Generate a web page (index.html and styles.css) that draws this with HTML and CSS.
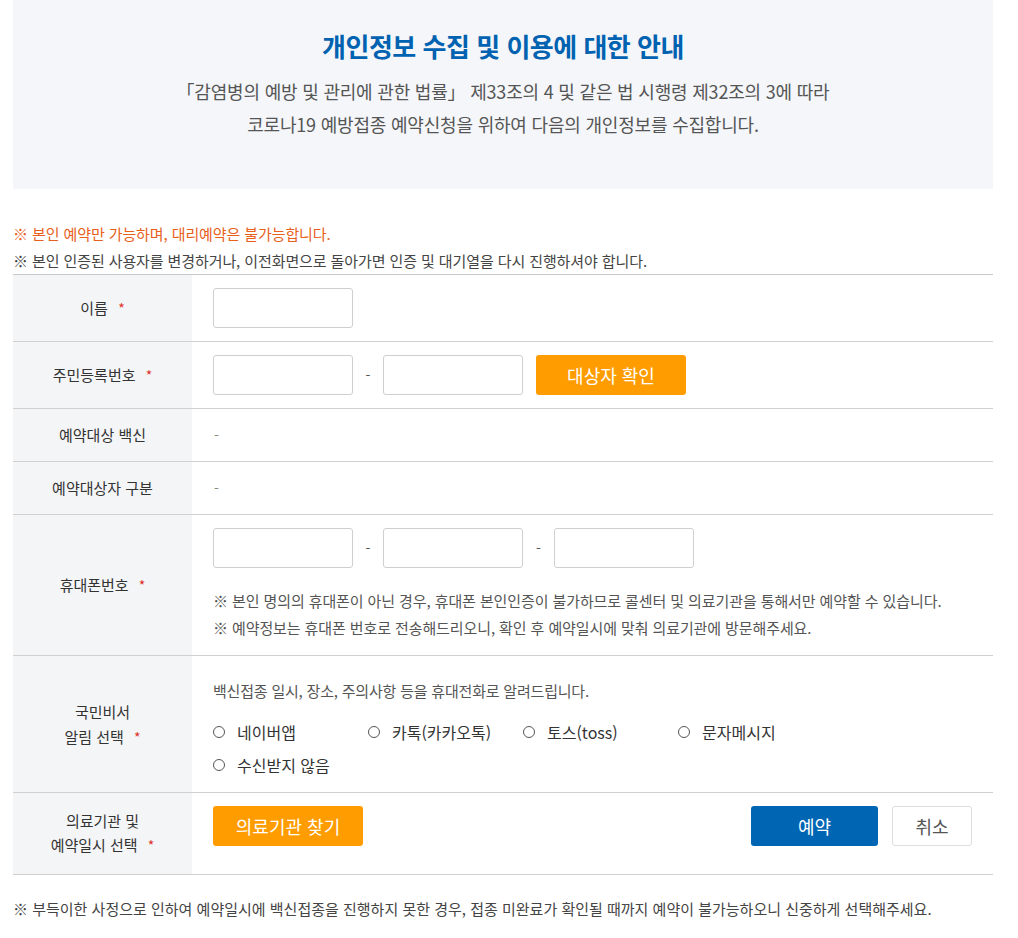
FILE: index.html
```html
<!DOCTYPE html>
<html lang="ko">
<head>
<meta charset="utf-8">
<title>개인정보 수집 및 이용에 대한 안내</title>
<link rel="stylesheet" href="styles.css">
</head>
<body>
<div class="page">
  <section class="intro">
    <h1 class="intro-title">개인정보 수집 및 이용에 대한 안내</h1>
    <p class="intro-text">「감염병의 예방 및 관리에 관한 법률」 제33조의 4 및 같은 법 시행령 제32조의 3에 따라<br>코로나19 예방접종 예약신청을 위하여 다음의 개인정보를 수집합니다.</p>
  </section>

  <div class="notices">
    <p class="notice notice-warn">※ 본인 예약만 가능하며, 대리예약은 불가능합니다.</p>
    <p class="notice">※ 본인 인증된 사용자를 변경하거나, 이전화면으로 돌아가면 인증 및 대기열을 다시 진행하셔야 합니다.</p>
  </div>

  <div class="form">
    <div class="row">
      <div class="label"><span>이름 <span class="req">*</span></span></div>
      <div class="cell">
        <div class="fields"><input class="inp" type="text"></div>
      </div>
    </div>

    <div class="row">
      <div class="label"><span>주민등록번호 <span class="req">*</span></span></div>
      <div class="cell">
        <div class="fields">
          <input class="inp" type="text"><span class="dash">-</span><input class="inp" type="text">
          <button class="btn btn-orange btn-check" type="button">대상자 확인</button>
        </div>
      </div>
    </div>

    <div class="row row-info">
      <div class="label"><span>예약대상 백신</span></div>
      <div class="cell cell-text"><span class="empty">-</span></div>
    </div>

    <div class="row row-info">
      <div class="label"><span>예약대상자 구분</span></div>
      <div class="cell cell-text"><span class="empty">-</span></div>
    </div>

    <div class="row">
      <div class="label"><span>휴대폰번호 <span class="req">*</span></span></div>
      <div class="cell cell-phone">
        <div class="fields">
          <input class="inp" type="text"><span class="dash">-</span><input class="inp" type="text"><span class="dash dash-wide">-</span><input class="inp" type="text">
        </div>
        <div class="phone-notes">
          <p class="note">※ 본인 명의의 휴대폰이 아닌 경우, 휴대폰 본인인증이 불가하므로 콜센터 및 의료기관을 통해서만 예약할 수 있습니다.</p>
          <p class="note">※ 예약정보는 휴대폰 번호로 전송해드리오니, 확인 후 예약일시에 맞춰 의료기관에 방문해주세요.</p>
        </div>
      </div>
    </div>

    <div class="row">
      <div class="label label-alarm"><span>국민비서<br>알림 선택 <span class="req">*</span></span></div>
      <div class="cell cell-alarm">
        <p class="alarm-desc">백신접종 일시, 장소, 주의사항 등을 휴대전화로 알려드립니다.</p>
        <div class="radios">
          <label class="radio"><span class="dot"></span>네이버앱</label>
          <label class="radio"><span class="dot"></span>카톡(카카오톡)</label>
          <label class="radio"><span class="dot"></span>토스(toss)</label>
          <label class="radio"><span class="dot"></span>문자메시지</label>
          <label class="radio"><span class="dot"></span>수신받지 않음</label>
        </div>
      </div>
    </div>

    <div class="row">
      <div class="label label-last"><span>의료기관 및<br>예약일시 선택 <span class="req">*</span></span></div>
      <div class="cell cell-actions">
        <button class="btn btn-orange" type="button">의료기관 찾기</button>
        <div class="actions-right">
          <button class="btn btn-blue" type="button">예약</button>
          <button class="btn btn-white" type="button">취소</button>
        </div>
      </div>
    </div>
  </div>

  <p class="footnote">※ 부득이한 사정으로 인하여 예약일시에 백신접종을 진행하지 못한 경우, 접종 미완료가 확인될 때까지 예약이 불가능하오니 신중하게 선택해주세요.</p>
</div>
</body>
</html>
```

FILE: styles.css
```css
* { box-sizing: border-box; }

html, body {
  margin: 0;
  padding: 0;
  background: #fff;
}

body {
  font-family: "Noto Sans CJK KR", "Noto Sans", "Liberation Sans", sans-serif;
  color: #333;
  font-size: 15px;
}

p { margin: 0; }

.page {
  padding: 0 25px 0 13px;
}

/* Intro box */
.intro {
  background: #f4f6f9;
  height: 189px;
  padding-top: 30px;
  text-align: center;
}

.intro-title {
  margin: 0;
  font-size: 26px;
  line-height: 32px;
  font-weight: 700;
  color: #0062b0;
  letter-spacing: -0.5px;
}

.intro-text {
  margin-top: 13px;
  font-size: 18px;
  line-height: 33px;
  color: #555;
  letter-spacing: -0.2px;
}

/* Notices */
.notices {
  margin-top: 31px;
}

.notice {
  font-size: 15px;
  line-height: 27px;
  color: #444;
  letter-spacing: -0.1px;
}

.notice-warn {
  color: #e8601c;
}

/* Form table */
.form {
  border-top: 1px solid #c8c8c8;
}

.row {
  display: grid;
  grid-template-columns: 179px 1fr;
  border-bottom: 1px solid #d0d0d0;
}

.label {
  background: #f4f5f7;
  display: flex;
  align-items: center;
  justify-content: center;
  text-align: center;
  font-size: 15px;
  line-height: 24px;
  color: #333;
}

.label-alarm {
  line-height: 25px;
}

.label-last {
  padding: 16px 0 17px;
}

.req {
  color: #e0312b;
  font-size: 14px;
  margin-left: 6px;
}

.cell {
  padding: 13px 21px 13px 21px;
}

.fields {
  display: flex;
  align-items: center;
}

.inp {
  width: 140px;
  height: 40px;
  border: 1px solid #cfcfcf;
  border-radius: 3px;
  background: #fff;
  margin: 0;
  padding: 0 8px;
  font: inherit;
}

.dash {
  width: 30px;
  text-align: center;
  font-size: 14px;
  color: #555;
}

.dash-wide {
  width: 31px;
}

.btn {
  height: 40px;
  border-radius: 3px;
  border: 0;
  font-family: inherit;
  font-size: 18px;
  cursor: pointer;
  padding: 0;
}

.btn-orange {
  width: 150px;
  background: #ff9c00;
  color: #fff;
}

.btn-check {
  margin-left: 13px;
}

.btn-blue {
  width: 127px;
  background: #0066b4;
  color: #fff;
}

.btn-white {
  width: 80px;
  background: #fff;
  color: #555;
  border: 1px solid #dedede;
}

/* Info rows */
.cell-text {
  height: 52px;
  display: flex;
  align-items: center;
  padding-top: 0;
  padding-bottom: 0;
}

.empty {
  font-size: 14px;
  color: #888;
  margin-left: 1px;
}

/* Phone */
.cell-phone {
  padding-bottom: 14px;
}

.phone-notes {
  margin-top: 19px;
}

.note {
  font-size: 15px;
  line-height: 27px;
  color: #555;
  letter-spacing: -0.1px;
}

/* Alarm */
.cell-alarm {
  padding-top: 21px;
  padding-bottom: 11px;
}

.alarm-desc {
  font-size: 15px;
  line-height: 27px;
  color: #555;
  letter-spacing: -0.2px;
}

.radios {
  margin-top: 11px;
  display: grid;
  grid-template-columns: repeat(4, 155px);
}

.radio {
  display: flex;
  align-items: center;
  height: 33px;
  font-size: 16px;
  color: #333;
}

.dot {
  width: 12px;
  height: 12px;
  border: 1px solid #555;
  border-radius: 50%;
  margin-right: 12px;
  flex: none;
}

/* Actions */
.cell-actions {
  display: flex;
  align-items: flex-start;
  justify-content: space-between;
}

.actions-right {
  display: flex;
  gap: 14px;
}

/* Footnote */
.footnote {
  margin-top: 20px;
  font-size: 15px;
  line-height: 27px;
  color: #444;
  letter-spacing: 0;
}
```
